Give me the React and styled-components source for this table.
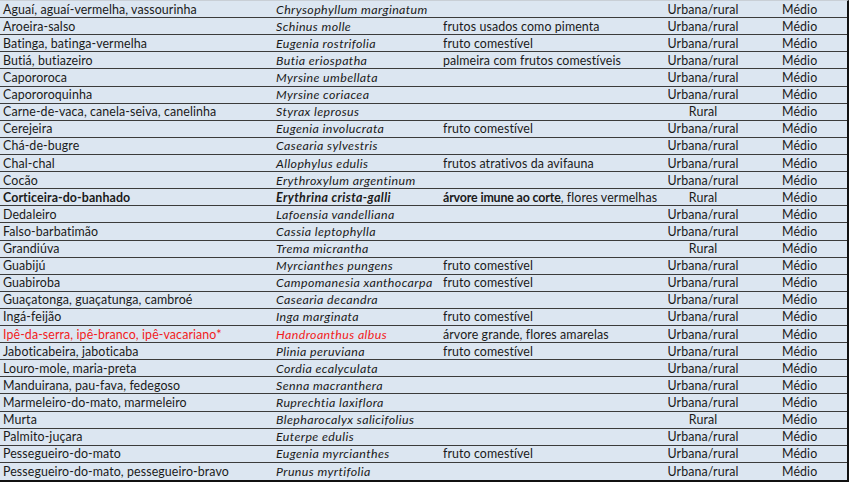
import React from 'react';
import styled, { createGlobalStyle } from 'styled-components';

const GlobalStyle = createGlobalStyle`
  html, body {
    margin: 0;
    padding: 0;
    background: #ffffff;
  }
`;

const Sheet = styled.div`
  width: 849px;
  height: 482px;
  box-sizing: border-box;
  display: grid;
  grid-template-rows: repeat(28, 1fr);
  background-color: #dce6f1;
  border-top: 1px solid #c9cfd6;
  border-right: 2px solid #111;
  border-bottom: 2px solid #111;
  font-family: Lato, 'Open Sans', sans-serif;
  font-size: 12.4px;
  color: #1a1a1a;
`;

const Row = styled.div`
  display: grid;
  grid-template-columns: 273px 168px 219px 86px 1fr;
  align-items: center;
  border-bottom: ${(p) => (p.last ? 'none' : '1px solid #3b3b3b')};
  color: ${(p) => (p.highlight ? '#f21c1c' : 'inherit')};
  font-weight: ${(p) => (p.strong ? 700 : 400)};
  line-height: 15px;
`;

const Cell = styled.div`
  padding-left: ${(p) => (p.pad !== undefined ? p.pad : 3)}px;
  white-space: nowrap;
  font-style: ${(p) => (p.italic ? 'italic' : 'normal')};
  letter-spacing: ${(p) => (p.italic ? '0.4px' : '0.1px')};
  text-align: ${(p) => (p.center ? 'center' : 'left')};
  color: ${(p) => (p.plain ? '#1a1a1a' : 'inherit')};
`;

const Note = styled.span`
  font-weight: 400;
`;

const Bold = styled.b`
  font-weight: 700;
  letter-spacing: -0.15px;
`;

const rows = [
  ['Aguaí, aguaí-vermelha, vassourinha', 'Chrysophyllum marginatum', '', 'Urbana/rural'],
  ['Aroeira-salso', 'Schinus molle', 'frutos usados como pimenta', 'Urbana/rural'],
  ['Batinga, batinga-vermelha', 'Eugenia rostrifolia', 'fruto comestível', 'Urbana/rural'],
  ['Butiá, butiazeiro', 'Butia eriospatha', 'palmeira com frutos comestíveis', 'Urbana/rural'],
  ['Capororoca', 'Myrsine umbellata', '', 'Urbana/rural'],
  ['Capororoquinha', 'Myrsine coriacea', '', 'Urbana/rural'],
  ['Carne-de-vaca, canela-seiva, canelinha', 'Styrax leprosus', '', 'Rural'],
  ['Cerejeira', 'Eugenia involucrata', 'fruto comestível', 'Urbana/rural'],
  ['Chá-de-bugre', 'Casearia sylvestris', '', 'Urbana/rural'],
  ['Chal-chal', 'Allophylus edulis', 'frutos atrativos da avifauna', 'Urbana/rural'],
  ['Cocão', 'Erythroxylum argentinum', '', 'Urbana/rural'],
  ['Corticeira-do-banhado', 'Erythrina crista-galli', 'BOLD', 'Rural', 'strong'],
  ['Dedaleiro', 'Lafoensia vandelliana', '', 'Urbana/rural'],
  ['Falso-barbatimão', 'Cassia leptophylla', '', 'Urbana/rural'],
  ['Grandiúva', 'Trema micrantha', '', 'Rural'],
  ['Guabijú', 'Myrcianthes pungens', 'fruto comestível', 'Urbana/rural'],
  ['Guabiroba', 'Campomanesia xanthocarpa', 'fruto comestível', 'Urbana/rural'],
  ['Guaçatonga, guaçatunga, cambroé', 'Casearia decandra', '', 'Urbana/rural'],
  ['Ingá-feijão', 'Inga marginata', 'fruto comestível', 'Urbana/rural'],
  ['Ipê-da-serra, ipê-branco, ipê-vacariano*', 'Handroanthus albus', 'árvore grande, flores amarelas', 'Urbana/rural', 'red'],
  ['Jaboticabeira, jaboticaba', 'Plinia peruviana', 'fruto comestível', 'Urbana/rural'],
  ['Louro-mole, maria-preta', 'Cordia ecalyculata', '', 'Urbana/rural'],
  ['Manduirana, pau-fava, fedegoso', 'Senna macranthera', '', 'Urbana/rural'],
  ['Marmeleiro-do-mato, marmeleiro', 'Ruprechtia laxiflora', '', 'Urbana/rural'],
  ['Murta', 'Blepharocalyx salicifolius', '', 'Rural'],
  ['Palmito-juçara', 'Euterpe edulis', '', 'Urbana/rural'],
  ['Pessegueiro-do-mato', 'Eugenia myrcianthes', 'fruto comestível', 'Urbana/rural'],
  ['Pessegueiro-do-mato, pessegueiro-bravo', 'Prunus myrtifolia', '', 'Urbana/rural'],
];

export default function App() {
  return (
    <>
      <GlobalStyle />
      <Sheet>
        {rows.map(([common, species, use, zone, flag], i) => (
          <Row
            key={common + i}
            last={i === rows.length - 1}
            strong={flag === 'strong'}
            highlight={flag === 'red'}
          >
            <Cell>{common}</Cell>
            <Cell italic>{species}</Cell>
            <Cell plain={flag === 'red'} pad={2}>
              {use === 'BOLD' ? (
                <>
                  <Bold>árvore imune ao corte</Bold>
                  <Note>, flores vermelhas</Note>
                </>
              ) : (
                use
              )}
            </Cell>
            <Cell plain center pad={0}>
              <Note>{zone}</Note>
            </Cell>
            <Cell plain pad={36}>
              <Note>Médio</Note>
            </Cell>
          </Row>
        ))}
      </Sheet>
    </>
  );
}
